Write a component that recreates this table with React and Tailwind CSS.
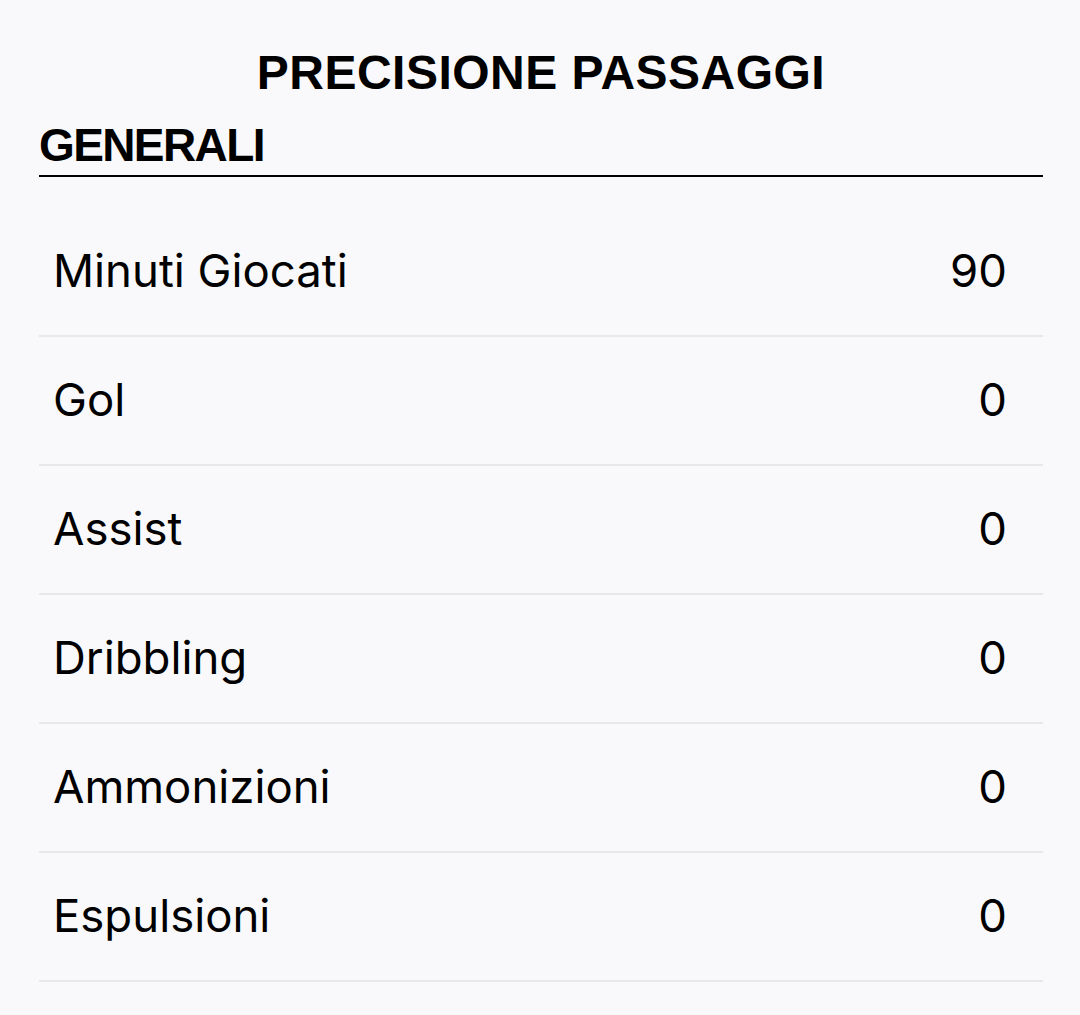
export default function App() {
  const rows = [
    ["Minuti Giocati", "90"],
    ["Gol", "0"],
    ["Assist", "0"],
    ["Dribbling", "0"],
    ["Ammonizioni", "0"],
    ["Espulsioni", "0"],
  ];
  return (
    <div className="min-h-[1015px] w-full bg-[#f9f9fb] text-black">
      <div className="pl-[39px] pr-[37px] pt-[45px]">
        <h1 className="text-center text-[48px] leading-[56px] font-bold tracking-[0.01em] [font-family:'Liberation_Sans',Arial,sans-serif]">
          PRECISIONE PASSAGGI
        </h1>
        <h2 className="mt-[18px] pb-[4px] border-b-2 border-black text-[46px] leading-[52px] font-bold tracking-[-0.035em] [font-family:'Liberation_Sans',Arial,sans-serif]">
          GENERALI
        </h2>
        <div className="mt-[31px] [font-family:Inter,'Liberation_Sans',sans-serif]">
          {rows.map(([label, value]) => (
            <div
              key={label}
              className="flex h-[129px] items-center justify-between border-b-2 border-[#e8e8ea] pl-[14px] pr-[36px] text-[45.5px]"
            >
              <span>{label}</span>
              <span>{value}</span>
            </div>
          ))}
        </div>
      </div>
    </div>
  );
}
